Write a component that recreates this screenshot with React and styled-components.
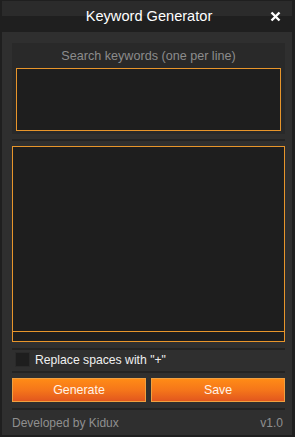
import styled, { createGlobalStyle } from 'styled-components'

const GlobalStyle = createGlobalStyle`
  html, body {
    margin: 0;
    padding: 0;
    background: #1f1f1f;
  }
  * {
    box-sizing: border-box;
  }
`

const Window = styled.div`
  width: 295px;
  height: 437px;
  background: #1f1f1f;
  padding: 0 3px 2px 2px;
  display: flex;
  flex-direction: column;
  font-family: 'Liberation Sans', Arial, sans-serif;
`

const TitleBar = styled.div`
  height: 32px;
  position: relative;
  display: flex;
  align-items: center;
  justify-content: center;
  background: linear-gradient(to bottom, #1f1f1f 0, #1f1f1f 1px, #2b2b2b 1px, #2b2b2b 16px, #1f1f1f 16px);
  color: #ffffff;
  font-size: 14.6px;
  padding-left: 4px;
`

const Close = styled.button`
  position: absolute;
  right: 11px;
  top: 10px;
  width: 12px;
  height: 12px;
  padding: 0;
  border: none;
  background: none;
  display: flex;
  align-items: center;
  justify-content: center;
`

const Body = styled.div`
  flex: 1;
  background: #2f2f2f;
  padding: 11px 7px 0 10px;
  display: flex;
  flex-direction: column;
`

const Section = styled.div`
  background: #292929;
  padding: 4px 4px 3px 4px;
  display: flex;
  flex-direction: column;
  align-items: stretch;
`

const Label = styled.div`
  text-align: center;
  color: #8c8c8c;
  font-size: 12.6px;
  height: 21px;
  line-height: 18px;
`

const Field = styled.div`
  height: ${(p) => p.$h}px;
  background: #1e1e1e;
  border: 1px solid #e7952b;
  display: flex;
  flex-direction: column;
`

const FieldArea = styled.div`
  flex: 1;
`

const HScroll = styled.div`
  height: 10px;
  border-top: 1px solid #e7952b;
`

const Separator = styled.div`
  height: 2px;
  background: #232323;
  margin: ${(p) => p.$m};
`

const CheckRow = styled.label`
  display: flex;
  align-items: center;
  height: 15px;
  padding-left: 3px;
  gap: 5px;
  color: #f0f0f0;
  font-size: 12.2px;
`

const Box = styled.span`
  width: 15px;
  height: 15px;
  background: #1e1e1e;
  border: 1px solid #2a2a2a;
`

const Buttons = styled.div`
  display: flex;
  gap: 5px;
  margin-top: 5px;
`

const Button = styled.button`
  flex: 1;
  height: 24px;
  border: 1px solid #f0a040;
  background: linear-gradient(to bottom, #ff8b16 0%, #f5761a 50%, #e2571e 100%);
  color: #fff3e8;
  font-family: 'Liberation Sans', Arial, sans-serif;
  font-size: 12.4px;
  padding: 0;
`

const Footer = styled.div`
  display: flex;
  justify-content: space-between;
  align-items: center;
  height: 22px;
  color: #8f8f8f;
  font-size: 12px;
  padding-right: 2px;
`

export default function App() {
  return (
    <>
      <GlobalStyle />
      <Window>
        <TitleBar>
          Keyword Generator
          <Close aria-label="close">
            <svg width="11" height="11" viewBox="0 0 11 11">
              <path d="M1.5 1.5 L9.5 9.5 M9.5 1.5 L1.5 9.5" stroke="#fff" strokeWidth="2.4" />
            </svg>
          </Close>
        </TitleBar>
        <Body>
          <Section>
            <Label>Search keywords (one per line)</Label>
            <Field $h={63}>
              <FieldArea />
            </Field>
          </Section>
          <Separator $m="5px 0 5px 0" />
          <Field $h={196}>
            <FieldArea />
            <HScroll />
          </Field>
          <Separator $m="6px 0 2px 0" />
          <CheckRow>
            <Box />
            Replace spaces with "+"
          </CheckRow>
          <Separator $m="4px 0 0 0" />
          <Buttons>
            <Button>Generate</Button>
            <Button>Save</Button>
          </Buttons>
          <Separator $m="6px 0 2px 0" />
          <Footer>
            <span>Developed by Kidux</span>
            <span>v1.0</span>
          </Footer>
        </Body>
      </Window>
    </>
  )
}
